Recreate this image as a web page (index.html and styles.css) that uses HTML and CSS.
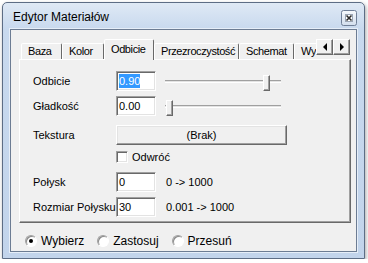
FILE: index.html
```html
<!DOCTYPE html>
<html lang="pl">
<head>
    <meta charset="UTF-8">
    <meta name="viewport" content="width=device-width, initial-scale=1.0">
    <title>Edytor Materiałów</title>
    <link rel="stylesheet" href="styles.css">
</head>
<body>
    <div class="window">
        <div class="titlebar">
            <span class="title">Edytor Materiałów</span>
            <span class="close-btn">
                <svg width="16" height="16" viewBox="0 0 16 16">
                    <defs>
                        <linearGradient id="closeGrad" x1="0" y1="0" x2="0" y2="1">
                            <stop offset="0" stop-color="#f7fafd"/>
                            <stop offset="1" stop-color="#d2deed"/>
                        </linearGradient>
                    </defs>
                    <rect x="0.5" y="0.5" width="15" height="15" rx="2" fill="url(#closeGrad)" stroke="#6f7f97"/>
                    <rect x="4.5" y="4.5" width="7" height="7" fill="#fff" stroke="#9aa5b4"/>
                    <path d="M5.5 5.5 L10.5 10.5 M10.5 5.5 L5.5 10.5" stroke="#2b2b2b" stroke-width="1.6"/>
                </svg>
            </span>
        </div>

        <div class="client">
            <div class="tabbar">
                <div class="tabs">
                    <div class="tab tab-baza">Baza</div>
                    <div class="tab tab-kolor">Kolor</div>
                    <div class="tab tab-odbicie active">Odbicie</div>
                    <div class="tab tab-przez">Przezroczystość</div>
                    <div class="tab tab-schemat">Schemat</div>
                    <div class="tab tab-wy">Wy</div>
                </div>
                <div class="spin">
                    <span class="spin-btn">
                        <svg width="8" height="8" viewBox="0 0 8 8"><polygon points="6,0 2,4 6,8" fill="#000"/></svg>
                    </span>
                    <span class="spin-btn">
                        <svg width="8" height="8" viewBox="0 0 8 8"><polygon points="2,0 6,4 2,8" fill="#000"/></svg>
                    </span>
                </div>
            </div>

            <div class="panel">
                <div class="row">
                    <span class="label">Odbicie</span>
                    <span class="field"><span class="selected">0.90</span></span>
                    <div class="slider">
                        <div class="track"></div>
                        <div class="thumb" style="left: 98px"></div>
                    </div>
                </div>
                <div class="row row-gap5">
                    <span class="label">Gładkość</span>
                    <span class="field">0.00</span>
                    <div class="slider">
                        <div class="track"></div>
                        <div class="thumb" style="left: 1px"></div>
                    </div>
                </div>
                <div class="row row-gap9">
                    <span class="label">Tekstura</span>
                    <span class="btn">(Brak)</span>
                </div>
                <div class="row row-check">
                    <span class="check"></span>
                    <span class="check-label">Odwróć</span>
                </div>
                <div class="row row-gap9">
                    <span class="label">Połysk</span>
                    <span class="field">0</span>
                    <span class="range">0 -&gt; 1000</span>
                </div>
                <div class="row row-gap5">
                    <span class="label">Rozmiar Połysku</span>
                    <span class="field">30</span>
                    <span class="range">0.001 -&gt; 1000</span>
                </div>
            </div>

            <div class="radios">
                <label class="radio-item"><span class="radio on"></span>Wybierz</label>
                <label class="radio-item"><span class="radio"></span>Zastosuj</label>
                <label class="radio-item"><span class="radio"></span>Przesuń</label>
            </div>
        </div>
    </div>
</body>
</html>
```

FILE: styles.css
```css
* {
    margin: 0;
    padding: 0;
    box-sizing: border-box;
}

body {
    background: #fff;
    font-family: "Liberation Sans", Arial, sans-serif;
    font-size: 11px;
    color: #000;
}

.window {
    margin: 2px 0 0 2px;
    width: 363px;
    height: 257px;
    border: 1px solid #5d6d85;
    border-radius: 5px 5px 0 0;
    background: linear-gradient(#dfe9f5, #c8d9ee 26px, #c2d4eb);
    padding: 0 7px 6px;
    display: flex;
    flex-direction: column;
    box-shadow: 1px 2px 4px rgba(0, 0, 0, 0.35);
}

.titlebar {
    height: 26px;
    display: flex;
    justify-content: space-between;
    align-items: flex-start;
    padding: 7px 0 0 3px;
}

.title {
    font-size: 12px;
    line-height: 14px;
}

.close-btn {
    display: block;
    width: 16px;
    height: 16px;
}

.close-btn svg {
    display: block;
}

.client {
    flex: 1;
    border: 1px solid #6c7c93;
    background: #f0f0f0;
    box-shadow: 0 0 0 1px #e6eef8;
    display: flex;
    flex-direction: column;
}

/* zakładki */
.tabbar {
    display: flex;
    height: 21px;
    margin: 9px 5px -1px 8px;
    position: relative;
    z-index: 1;
}

.tabs {
    flex: 1;
    display: flex;
    align-items: flex-end;
    overflow: hidden;
    padding-left: 2px;
}

.tab {
    flex: none;
    height: 16px;
    margin-bottom: 1px;
    padding-left: 6px;
    line-height: 14px;
    white-space: nowrap;
    letter-spacing: -0.4px;
    background: #f0f0f0;
    border: 1px solid;
    border-bottom: none;
    border-color: #fff #696969 transparent #fff;
    border-radius: 2px 2px 0 0;
}

.tab.active {
    height: 21px;
    margin-bottom: 0;
    padding-top: 2px;
}

.tab-baza { width: 41px; }
.tab-kolor { width: 42px; }
.tab-odbicie { width: 50px; }
.tab-przez { width: 85px; }
.tab-schemat { width: 55px; }
.tab-wy { width: 40px; }

.spin {
    display: flex;
    margin-right: 1px;
}

.spin-btn {
    width: 17px;
    height: 16px;
    background: #f0f0f0;
    border: 1px solid;
    border-color: #fff #696969 #696969 #fff;
    box-shadow: inset -1px -1px #a0a0a0;
    display: flex;
    align-items: center;
    justify-content: center;
}

.spin-btn svg {
    display: block;
}

/* panel */
.panel {
    margin: 0 5px 0 8px;
    border: 1px solid;
    border-color: #fff #696969 #696969 #fff;
    box-shadow: inset -1px -1px #a0a0a0;
    padding: 11px 0 5px 13px;
    display: flex;
    flex-direction: column;
}

.row {
    display: flex;
    align-items: center;
    height: 20px;
}

.row-gap5 { margin-top: 5px; }
.row-gap9 { margin-top: 9px; }

.row-check {
    margin-top: 6px;
    height: 12px;
    padding-left: 83px;
}

.label {
    flex: none;
    width: 83px;
    white-space: nowrap;
}

.field {
    flex: none;
    width: 40px;
    height: 20px;
    display: flex;
    align-items: center;
    padding-left: 2px;
    background: #fff;
    border: 1px solid;
    border-color: #a0a0a0 #fff #fff #a0a0a0;
    box-shadow: inset 1px 1px #696969, inset -1px -1px #e3e3e3;
}

.selected {
    background: #3399ff;
    color: #fff;
    line-height: 14px;
}

.slider {
    flex: none;
    position: relative;
    width: 116px;
    height: 20px;
    margin-left: 9px;
}

.track {
    margin-top: 9px;
    height: 3px;
    border-top: 1px solid #a0a0a0;
    border-bottom: 1px solid #fff;
    background: #e3e3e3;
}

.thumb {
    position: absolute;
    top: 4px;
    width: 7px;
    height: 16px;
    background: #f0f0f0;
    border: 1px solid;
    border-color: #fff #696969 #696969 #fff;
    box-shadow: inset -1px -1px #a0a0a0;
}

.btn {
    flex: none;
    width: 171px;
    height: 20px;
    text-align: center;
    line-height: 18px;
    background: #f0f0f0;
    border: 1px solid;
    border-color: #fff #696969 #696969 #fff;
    box-shadow: inset -1px -1px #a0a0a0, inset 1px 1px #e3e3e3;
}

.check {
    flex: none;
    width: 12px;
    height: 12px;
    background: #fff;
    border: 1px solid;
    border-color: #a0a0a0 #fff #fff #a0a0a0;
    box-shadow: inset 1px 1px #696969, inset -1px -1px #e3e3e3;
}

.check-label {
    margin-left: 4px;
}

.range {
    margin-left: 10px;
    white-space: nowrap;
}

/* przełączniki */
.radios {
    display: flex;
    gap: 13px;
    margin: 12px 0 0 14px;
    font-size: 12px;
    line-height: 12px;
}

.radio-item {
    display: flex;
    align-items: center;
    gap: 4px;
}

.radio {
    width: 12px;
    height: 12px;
    border-radius: 50%;
    background: #fff;
    border: 1px solid;
    border-color: #a0a0a0 #fff #fff #a0a0a0;
    box-shadow: inset 1px 1px #8a8a8a;
}

.radio.on::after {
    content: "";
    display: block;
    width: 4px;
    height: 4px;
    margin: 3px;
    border-radius: 50%;
    background: #000;
}
```
